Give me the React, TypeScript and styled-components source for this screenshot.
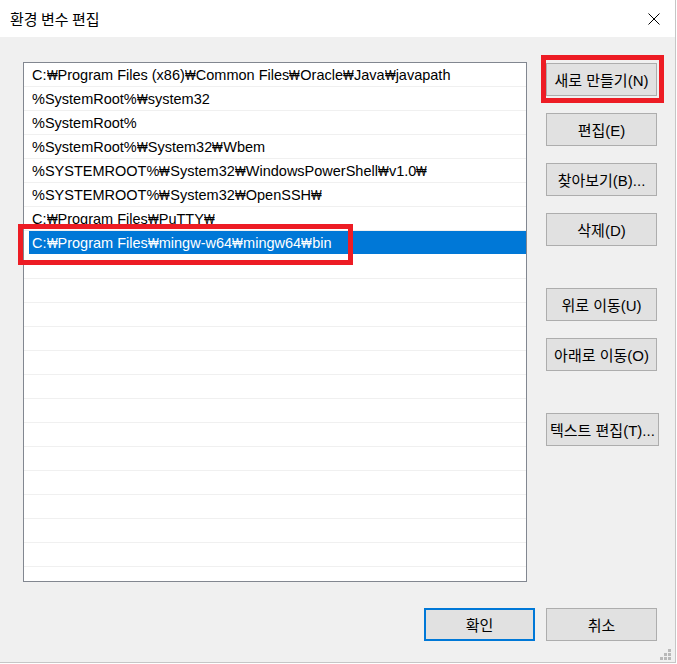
import React from "react";
import styled, { createGlobalStyle, css } from "styled-components";

const GlobalStyle = createGlobalStyle`
  html, body {
    margin: 0;
    padding: 0;
    background: #ffffff;
  }
  * { box-sizing: border-box; }
`;

const UI_FONT = `"Segoe UI", "Liberation Sans", "Noto Sans", "Noto Sans CJK KR", sans-serif`;
const KR_FONT = `"Malgun Gothic", "Noto Sans CJK KR", sans-serif`;

const Window = styled.div`
  position: relative;
  width: 676px;
  height: 663px;
  background: #f0f0f0;
  border-right: 1px solid #c6c6c6;
  border-bottom: 1px solid #c6c6c6;
  display: flex;
  flex-direction: column;
  font-family: ${UI_FONT};
  color: #000;
`;

const TitleBar = styled.div`
  height: 37px;
  flex: none;
  background: #ffffff;
  display: flex;
  align-items: center;
  justify-content: space-between;
  padding: 1px 15px 0 10px;
`;

const Title = styled.div`
  font-family: ${KR_FONT};
  font-size: 15px;
  line-height: 20px;
`;

const CloseIcon = styled.svg`
  width: 12px;
  height: 12px;
  display: block;
`;

const Body = styled.div`
  flex: 1;
  display: flex;
  flex-direction: column;
  padding: 25px 18px 0 23px;
`;

const MainRow = styled.div`
  display: flex;
  gap: 19px;
`;

const ListBox = styled.div`
  flex: none;
  width: 504px;
  height: 520px;
  border: 1px solid #828790;
  background: #ffffff;
  overflow: hidden;
`;

const Row = styled.div<{ $selected?: boolean }>`
  height: 24px;
  border-bottom: 1px solid #f0f0f0;
  padding-left: 8px;
  font-size: 14.5px;
  line-height: 24px;
  white-space: nowrap;
  overflow: hidden;
  ${(p) =>
    p.$selected &&
    css`
      background: linear-gradient(to right, #ffffff 5px, #0078d7 5px);
      color: #ffffff;
      border-bottom-color: #ffffff;
    `}
`;

const Won = styled.span`
  display: inline-block;
  width: 11px;
  transform: scaleX(0.78);
  transform-origin: 0 50%;
  white-space: nowrap;
`;

const ButtonColumn = styled.div`
  flex: none;
  width: 111px;
  display: flex;
  flex-direction: column;
  align-items: flex-start;
  gap: 42px;
  padding-top: 1px;
`;

const ButtonGroup = styled.div`
  display: flex;
  flex-direction: column;
  align-items: flex-start;
  gap: 17px;
`;

const Button = styled.button<{ $default?: boolean }>`
  flex: none;
  height: 33px;
  min-width: 111px;
  padding: 0 3px;
  background: #e1e1e1;
  border: 1px solid #adadad;
  border-radius: 0;
  font-family: ${UI_FONT};
  font-size: 15px;
  color: #000;
  white-space: nowrap;
  display: flex;
  align-items: center;
  justify-content: center;
  ${(p) =>
    p.$default &&
    css`
      border: 2px solid #0078d7;
    `}
`;

const Footer = styled.div`
  display: flex;
  justify-content: flex-end;
  gap: 11px;
  margin-top: 26px;
`;

const Highlight = styled.div<{ $x: number; $y: number; $w: number; $h: number }>`
  position: absolute;
  left: ${(p) => p.$x}px;
  top: ${(p) => p.$y}px;
  width: ${(p) => p.$w}px;
  height: ${(p) => p.$h}px;
  border: 5px solid #ed1c24;
  pointer-events: none;
`;

const Grip = styled.svg`
  position: absolute;
  right: 4px;
  bottom: 2px;
  width: 11px;
  height: 11px;
`;

const W = "\u20A9";

const paths = [
  `C:${W}Program Files (x86)${W}Common Files${W}Oracle${W}Java${W}javapath`,
  `%SystemRoot%${W}system32`,
  `%SystemRoot%`,
  `%SystemRoot%${W}System32${W}Wbem`,
  `%SYSTEMROOT%${W}System32${W}WindowsPowerShell${W}v1.0${W}`,
  `%SYSTEMROOT%${W}System32${W}OpenSSH${W}`,
  `C:${W}Program Files${W}PuTTY${W}`,
  `C:${W}Program Files${W}mingw-w64${W}mingw64${W}bin`,
];

const SELECTED = 7;
const TOTAL_ROWS = 22;

function PathText({ text }: { text: string }) {
  const parts = text.split(W);
  return (
    <>
      {parts.map((part, i) => (
        <React.Fragment key={i}>
          {part}
          {i < parts.length - 1 && <Won>{W}</Won>}
        </React.Fragment>
      ))}
    </>
  );
}

export default function App() {
  const rows = Array.from({ length: TOTAL_ROWS }, (_, i) => paths[i] ?? "");
  return (
    <>
      <GlobalStyle />
      <Window>
        <TitleBar>
          <Title>환경 변수 편집</Title>
          <CloseIcon viewBox="0 0 12 12">
            <path d="M0.5 0.5 L11.5 11.5 M11.5 0.5 L0.5 11.5" stroke="#000" strokeWidth="1" fill="none" />
          </CloseIcon>
        </TitleBar>
        <Body>
          <MainRow>
            <ListBox>
              {rows.map((text, i) => (
                <Row key={i} $selected={i === SELECTED}>
                  {text ? <PathText text={text} /> : "\u00A0"}
                </Row>
              ))}
            </ListBox>
            <ButtonColumn>
              <ButtonGroup>
                <Button>새로 만들기(N)</Button>
                <Button>편집(E)</Button>
                <Button>찾아보기(B)...</Button>
                <Button>삭제(D)</Button>
              </ButtonGroup>
              <ButtonGroup>
                <Button>위로 이동(U)</Button>
                <Button>아래로 이동(O)</Button>
              </ButtonGroup>
              <ButtonGroup>
                <Button>텍스트 편집(T)...</Button>
              </ButtonGroup>
            </ButtonColumn>
          </MainRow>
          <Footer>
            <Button $default>확인</Button>
            <Button>취소</Button>
          </Footer>
        </Body>
        <Grip viewBox="0 0 11 11">
          <g fill="#b9b9b9">
            <rect x="8" y="0" width="3" height="3" />
            <rect x="4" y="4" width="3" height="3" />
            <rect x="8" y="4" width="3" height="3" />
            <rect x="0" y="8" width="3" height="3" />
            <rect x="4" y="8" width="3" height="3" />
            <rect x="8" y="8" width="3" height="3" />
          </g>
        </Grip>
        <Highlight $x={541} $y={55} $w={123} $h={48} />
        <Highlight $x={18} $y={224} $w={335} $h={41} />
      </Window>
    </>
  );
}
